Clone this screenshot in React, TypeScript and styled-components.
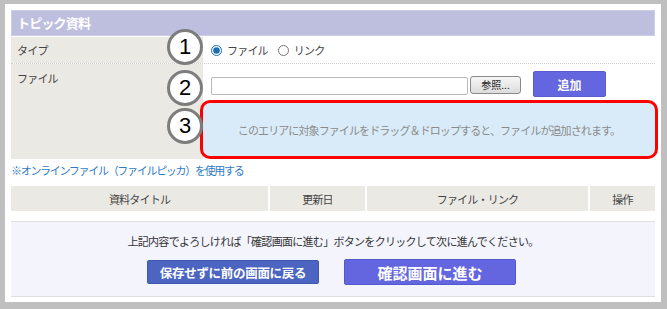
import styled, { createGlobalStyle } from 'styled-components';

const GlobalStyle = createGlobalStyle`
    html, body {
        margin: 0;
        padding: 0;
        background: #ffffff;
    }
    body {
        font-family: "Noto Sans CJK JP", "Noto Sans", sans-serif;
        font-size: 11px;
        color: #333333;
    }
`;

const columns = [
    { label: '資料タイトル', width: 257 },
    { label: '更新日', width: 95 },
    { label: 'ファイル・リンク', width: 223 },
    { label: '操作', width: 65 },
];

const badges = [
    { n: 1, top: 25 },
    { n: 2, top: 66 },
    { n: 3, top: 104 },
];

export default function App() {
    return (
        <>
            <GlobalStyle />
            <Frame>
                <Header>トピック資料</Header>
                <FormTable>
                    <Row $divider>
                        <LabelCell>タイプ</LabelCell>
                        <ValueCell $center>
                            <RadioLabel>
                                <Radio type="radio" name="type" defaultChecked />
                                ファイル
                            </RadioLabel>
                            <RadioLabel>
                                <Radio type="radio" name="type" />
                                リンク
                            </RadioLabel>
                        </ValueCell>
                    </Row>
                    <Row>
                        <LabelCell $top>ファイル</LabelCell>
                        <ValueCell $stack>
                            <FileRow>
                                <FileInput type="text" />
                                <BrowseButton>参照...</BrowseButton>
                                <AddButton>追加</AddButton>
                            </FileRow>
                            <DropZone>
                                このエリアに対象ファイルをドラッグ＆ドロップすると、ファイルが追加されます。
                            </DropZone>
                        </ValueCell>
                    </Row>
                </FormTable>
                <PickerLink href="#">※オンラインファイル（ファイルピッカ）を使用する</PickerLink>
                <ListHeader>
                    {columns.map((c) => (
                        <HeadCell key={c.label} $width={c.width}>
                            {c.label}
                        </HeadCell>
                    ))}
                </ListHeader>
                <Footer>
                    <Notice>上記内容でよろしければ「確認画面に進む」ボタンをクリックして次に進んでください。</Notice>
                    <Actions>
                        <BackButton>保存せずに前の画面に戻る</BackButton>
                        <NextButton>確認画面に進む</NextButton>
                    </Actions>
                </Footer>
                {badges.map((b) => (
                    <Badge key={b.n} $top={b.top}>
                        {b.n}
                    </Badge>
                ))}
            </Frame>
        </>
    );
}

const Frame = styled.div`
    position: relative;
    width: 667px;
    height: 309px;
    box-sizing: border-box;
    border-style: solid;
    border-color: #bfbfbf;
    border-width: 4px 6px 7px 5px;
    padding: 6px 6px 0 6px;
    background: #ffffff;
`;

const Header = styled.div`
    height: 26px;
    box-sizing: border-box;
    border: 1px solid #cdcee6;
    background: #bebfdf;
    color: #ffffff;
    font-weight: bold;
    font-size: 13px;
    letter-spacing: -0.8px;
    line-height: 24px;
    padding-left: 5px;
`;

const FormTable = styled.div`
    margin-top: 1px;
`;

const Row = styled.div<{ $divider?: boolean }>`
    display: grid;
    grid-template-columns: 192px 1fr;
    border-bottom: ${(p) => (p.$divider ? '1px dotted #cfcfcf' : 'none')};
`;

const LabelCell = styled.div<{ $top?: boolean }>`
    background: #ebe9e3;
    padding: ${(p) => (p.$top ? '6px 6px 0' : '0 6px')};
    display: flex;
    align-items: ${(p) => (p.$top ? 'flex-start' : 'center')};
    letter-spacing: -0.8px;
    color: #444444;
`;

const ValueCell = styled.div<{ $center?: boolean; $stack?: boolean }>`
    display: flex;
    flex-direction: ${(p) => (p.$stack ? 'column' : 'row')};
    align-items: ${(p) => (p.$center ? 'center' : 'stretch')};
    gap: ${(p) => (p.$center ? '10px' : '3px')};
    height: ${(p) => (p.$center ? '26px' : 'auto')};
    padding: ${(p) => (p.$stack ? '7px 0 0 8px' : '0 0 0 8px')};
`;

const RadioLabel = styled.label`
    display: flex;
    align-items: center;
    gap: 5px;
    letter-spacing: -0.8px;
    color: #444444;
`;

const Radio = styled.input`
    width: 11px;
    height: 11px;
    margin: 0;
    accent-color: #1f6fae;
`;

const FileRow = styled.div`
    display: flex;
    align-items: center;
    height: 26px;
`;

const FileInput = styled.input`
    width: 257px;
    height: 18px;
    box-sizing: border-box;
    margin: 3px 2px 0 0;
    border: 1px solid #b9b9b9;
    border-radius: 2px;
    background: #ffffff;
`;

const BrowseButton = styled.button`
    width: 51px;
    height: 18px;
    margin-top: 1px;
    padding: 0;
    box-sizing: border-box;
    border: 1px solid #8a8a8a;
    border-radius: 3px;
    background: linear-gradient(#f6f6f6, #dcdcdc);
    font-family: inherit;
    font-size: 10px;
    color: #222222;
`;

const AddButton = styled.button`
    width: 73px;
    height: 26px;
    margin-left: 12px;
    box-sizing: border-box;
    border: 1px solid #5a5cd0;
    border-radius: 2px;
    background: #6466df;
    color: #ffffff;
    font-family: inherit;
    font-weight: bold;
    font-size: 12px;
`;

const DropZone = styled.div`
    margin: 0 -3px 0 -11px;
    height: 59px;
    box-sizing: border-box;
    border: 3px solid #ff0000;
    border-radius: 10px;
    background: #d9ebf8;
    display: flex;
    align-items: center;
    justify-content: center;
    color: #8a8a8a;
    letter-spacing: -0.9px;
`;

const PickerLink = styled.a`
    display: block;
    margin-top: 3px;
    line-height: 16px;
    color: #2f7cc3;
    text-decoration: none;
    letter-spacing: -1.3px;
`;

const ListHeader = styled.div`
    display: flex;
    gap: 2px;
    margin-top: 8px;
    height: 25px;
`;

const HeadCell = styled.div<{ $width: number }>`
    width: ${(p) => p.$width}px;
    flex: ${(p) => (p.$width > 200 && p.$width < 250 ? '1' : 'none')};
    background: #ebe9e3;
    display: flex;
    align-items: center;
    justify-content: center;
    letter-spacing: -0.8px;
    color: #444444;
`;

const Footer = styled.div`
    margin-top: 10px;
    border-top: 1px solid #dedede;
    border-bottom: 1px solid #dedede;
    background: #f3f4fc;
    padding: 11px 0 11px;
    display: flex;
    flex-direction: column;
    align-items: center;
    gap: 10px;
`;

const Notice = styled.div`
    line-height: 16px;
    letter-spacing: -0.7px;
    color: #333333;
`;

const Actions = styled.div`
    display: flex;
    align-items: center;
    gap: 25px;
    margin-left: -3px;
`;

const BackButton = styled.button`
    width: 172px;
    height: 24px;
    border: 1px solid #3f58ae;
    border-radius: 2px;
    background: #4b65c0;
    color: #ffffff;
    font-family: inherit;
    font-weight: bold;
    font-size: 12.5px;
    letter-spacing: -0.3px;
    padding: 0;
`;

const NextButton = styled.button`
    width: 172px;
    height: 26px;
    border: 1px solid #5557cf;
    border-radius: 2px;
    background: #6366de;
    color: #ffffff;
    font-family: inherit;
    font-weight: bold;
    font-size: 15px;
    padding: 0;
`;

const Badge = styled.div<{ $top: number }>`
    position: absolute;
    left: 162px;
    top: ${(p) => p.$top}px;
    width: 36px;
    height: 36px;
    box-sizing: border-box;
    border: 3px solid #7d7d7d;
    border-radius: 50%;
    background: #ffffff;
    display: flex;
    align-items: center;
    justify-content: center;
    font-family: "Liberation Sans", Arial, sans-serif;
    font-size: 22px;
    color: #000000;
`;
